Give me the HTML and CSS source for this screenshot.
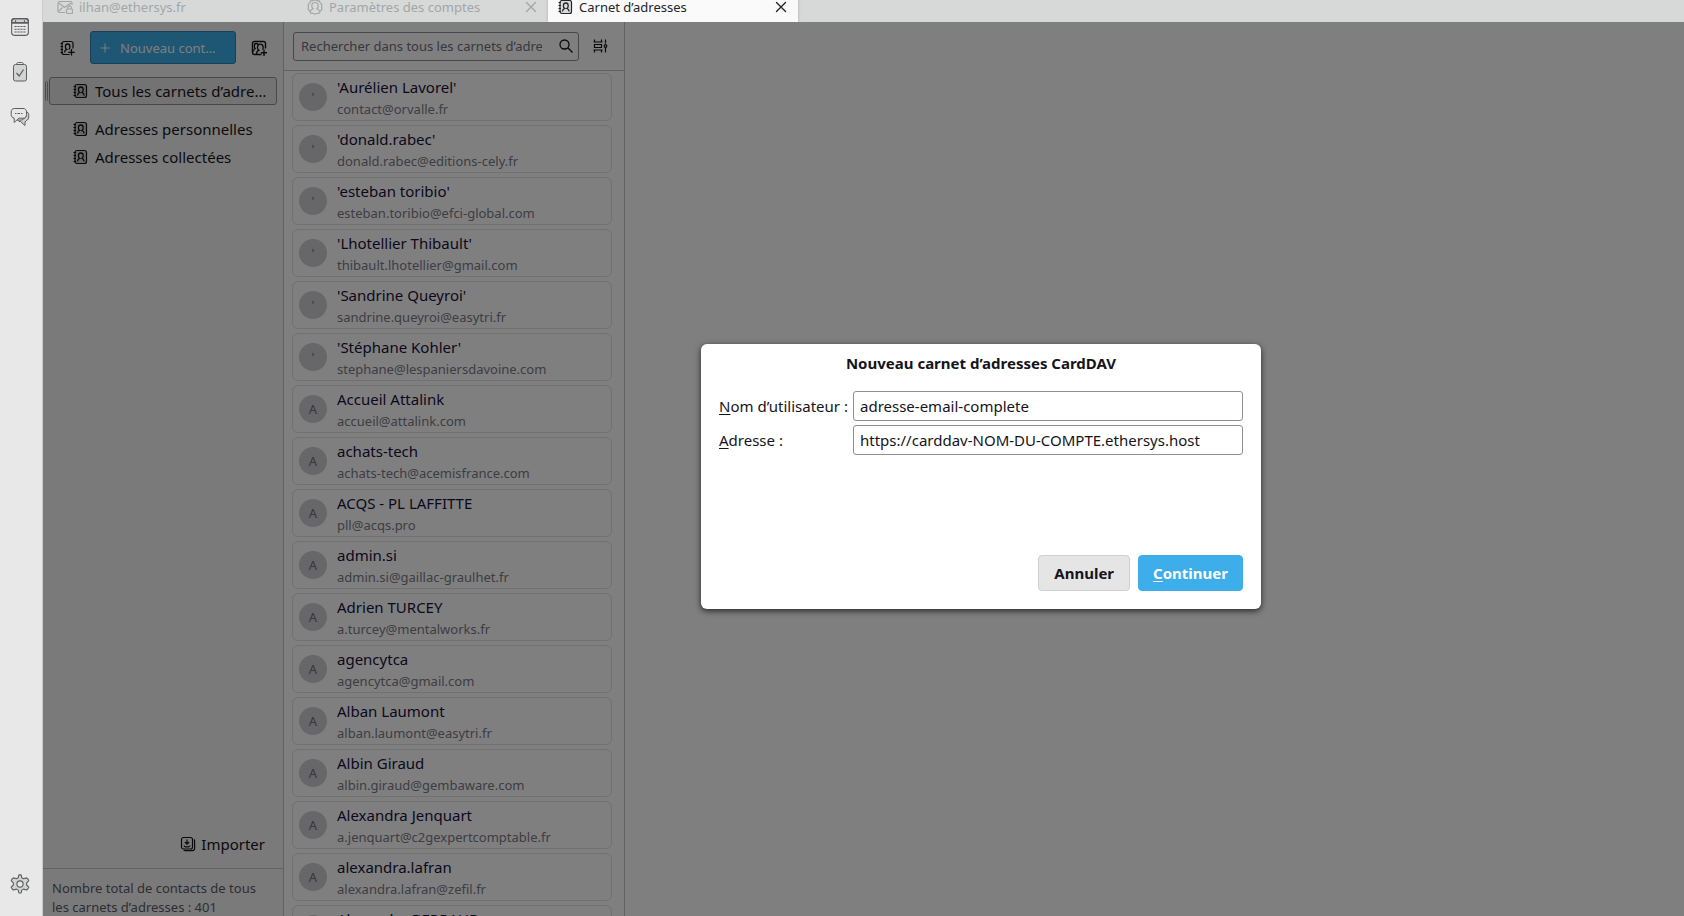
FILE: index.html
```html
<!DOCTYPE html>
<html lang="fr">
<head>
<meta charset="utf-8">
<title>Carnet d’adresses</title>
<link rel="stylesheet" href="styles.css">
</head>
<body>
<svg class="sprite" aria-hidden="true">
  <symbol id="i-book" viewBox="0 0 16 16">
    <rect x="3" y="1.500" width="11.500" height="13" rx="2" fill="currentColor" fill-opacity=".15" stroke="currentColor" stroke-width="1.200"/>
    <path d="M1.500 3.500h2.500M1.500 6.500h2.500M1.500 9.500h2.500M1.500 12.500h2.500" stroke="currentColor" stroke-width="1.200"/>
    <path d="M5.500 12.500c0-2 1-2.600 2.200-3C6.600 8.800 6.400 7.800 6.400 6.700 6.400 5 7.400 4 8.800 4s2.400 1 2.400 2.700c0 1.100-.2 2.100-1.300 2.800 1.200.4 2.200 1 2.200 3" fill="none" stroke="currentColor" stroke-width="1.300"/>
  </symbol>
  <symbol id="i-book-add" viewBox="0 0 16 16">
    <path d="M14 8.500V3.500a2 2 0 0 0-2-2H5a2 2 0 0 0-2 2v9a2 2 0 0 0 2 2h5.500" fill="none" stroke="currentColor" stroke-width="1.200"/>
    <path d="M1.500 3.500h2.500M1.500 6.500h2.500M1.500 9.500h2.500M1.500 12.500h2.500" stroke="currentColor" stroke-width="1.200"/>
    <path d="M5.500 12.500c0-2 1-2.600 2.200-3C6.600 8.800 6.400 7.800 6.400 6.700 6.400 5 7.300 4 8.600 4s2.300 1 2.300 2.700c0 1.100-.2 2.100-1.200 2.800M12.500 9v6.500M9.300 12.300h6.400" fill="none" stroke="currentColor" stroke-width="1.300"/>
  </symbol>
  <symbol id="i-list-add" viewBox="0 0 16 16">
    <path d="M14.500 8.500V3.500a2 2 0 0 0-2-2h-9a2 2 0 0 0-2 2v9a2 2 0 0 0 2 2H10.500" fill="none" stroke="currentColor" stroke-width="1.400"/>
    <path d="M5.500 14c0-2.300.8-3.200 2.300-3.700C6.800 9.600 6.500 8.500 6.500 7.500 6.500 5.500 7.600 4.200 9.400 4.200s2.800 1.300 2.800 3.300c0 .8-.2 1.500-.7 2.100M7 4.300C6.500 3.700 5.900 3.500 5.300 3.500c-1.300 0-2 1-2 2.500 0 1 .2 1.800.9 2.500C3.200 9 2.500 9.900 2.400 11.500" fill="none" stroke="currentColor" stroke-width="1.300"/>
    <path d="M13 9.500V16M9.800 12.700H16" stroke="currentColor" stroke-width="1.400"/>
  </symbol>
  <symbol id="i-close" viewBox="0 0 16 16"><path d="M3.500 3.500l9 9M12.500 3.500l-9 9" stroke="currentColor" stroke-width="1.400" stroke-linecap="round"/></symbol>
</svg>

<div class="app">
  <nav class="rail" aria-label="Espaces">
    <button class="rail-btn" aria-label="Agenda"><svg class="rail-icon" viewBox="0 0 18 18" fill="none" stroke="currentColor"><path d="M1.500 5V4a2.500 2.500 0 0 1 2.500-2.500h10A2.500 2.500 0 0 1 16.500 4v1z" fill="#cfcfcf"/><rect x="1.500" y="1.500" width="15" height="15" rx="2.500"/><path d="M1.500 5.500h15M5 3v2.500M13 3v2.500"/><path d="M4 8.500h10M4 11h10M4 13.500h10" stroke-dasharray="2 .67"/></svg></button>
    <button class="rail-btn" aria-label="Tâches"><svg class="rail-icon" viewBox="0 0 18 20" fill="none" stroke="currentColor"><rect x="2.500" y="2.500" width="13" height="16.500" rx="2" fill="#d2d3d3"/><path d="M5.500 2.500c0-1.200.8-2 2-2h3c1.200 0 2 .8 2 2z" fill="#e8e8e8"/><path d="M5.500 11l2.700 3L12.500 7.500" stroke-width="1.200"/></svg></button>
    <button class="rail-btn" aria-label="Discussion"><svg class="rail-icon" viewBox="0 0 20 20" fill="none" stroke="currentColor"><path d="M16 4.500c2 .6 2.800 2 2.800 4.500 0 2.500-.8 4-2.500 4.700L15 15v3.500L10.500 14.500H9l-1.500-1.500H12l4-3z" fill="#cfcfcf"/><path d="M4.500 1.500h8.500c2.300 0 3.500 1.300 3.500 3.500v2.500c0 2.500-1.200 3.700-3.500 3.700H8.800L4.200 15.500v-4.400C2.300 10.700 1.200 9.500 1.200 7.500V5c0-2.200 1.100-3.500 3.300-3.500z" fill="#e8e8e8"/><path d="M5 6.500h1.500M7.500 6.500h2.500M11 6.500h1.500"/></svg></button>
    <button class="rail-btn rail-last" aria-label="Paramètres"><svg class="rail-icon" viewBox="0 0 18 18" fill="none" stroke="currentColor" stroke-linejoin="round"><path d="M8 .8h2l.6 2.600 1.600.9 2.700-.8 1.100.9.900 1.500-1.900 2v2l1.900 2-.9 1.600-1.100.9-2.700-.8-1.600.9-.6 2.600H8l-.6-2.600-1.600-.9-2.700.8-1.100-.9-.9-1.600 1.900-2v-2l-1.900-2 .9-1.500 1.100-.9 2.700.8 1.600-.9z" fill="#d2d3d3"/><circle cx="9" cy="9" r="2.800" fill="#e8e8e8"/></svg></button>
  </nav>

  <div class="window">
    <div class="tabs" role="tablist">
      <div class="tab" role="tab"><svg class="icon" viewBox="0 0 16 16" fill="none" stroke="currentColor" stroke-width="1.200"><path d="M8 13.500H2.500a1.500 1.500 0 0 1-1.500-1.500V4a1.500 1.500 0 0 1 1.500-1.500h11A1.500 1.500 0 0 1 15 4v2M2 4l5.500 4.500L14 4M2 12l3.500-3.500"/><rect x="9.500" y="10" width="6" height="4.500" rx="1"/><path d="M10.800 10V8.500a1.700 1.700 0 0 1 3.400 0V10"/></svg><span class="tab-label">ilhan@ethersys.fr</span></div>
      <div class="tab" role="tab"><svg class="icon" viewBox="0 0 16 16" fill="none" stroke="currentColor" stroke-width="1.200"><path d="M8 .8l2 .9 2.300.1.900 2.100 1.600 1.500-.2 2.600.2 2.600-1.600 1.500-.9 2.100-2.300.1-2 .9-2-.9-2.300-.1-.9-2.100-1.600-1.500.2-2.600-.2-2.600 1.600-1.500.9-2.100L6 1.700z"/><path d="M3.500 12.500c0-1.800 1-2.300 2.500-2.800C5 8.900 4.800 8 4.800 6.800 4.800 4.700 6 3.500 8 3.500s3.200 1.200 3.200 3.300c0 1.200-.2 2.100-1.200 2.900 1.500.5 2.500 1 2.500 2.800"/></svg><span class="tab-label">Paramètres des comptes</span><button class="tab-close" aria-label="Fermer"><svg class="icon"><use href="#i-close"/></svg></button></div>
      <div class="tab tab-active" role="tab" aria-selected="true"><svg class="icon"><use href="#i-book"/></svg><span class="tab-label">Carnet d’adresses</span><button class="tab-close" aria-label="Fermer"><svg class="icon"><use href="#i-close"/></svg></button></div>
    </div>

    <div class="content">
      <aside class="sidebar">
        <div class="toolbar">
          <button class="icon-btn" aria-label="Nouveau carnet"><svg class="icon"><use href="#i-book-add"/></svg></button>
          <button class="new-contact"><svg class="plus" viewBox="0 0 10 10"><path d="M5 .5v9M.5 5h9" stroke="currentColor"/></svg><span class="ellipsis">Nouveau contact</span></button>
          <button class="icon-btn" aria-label="Nouvelle liste"><svg class="icon"><use href="#i-list-add"/></svg></button>
        </div>
        <div class="books">
          <div class="book-current"><span class="grip"></span><button class="book book-selected"><svg class="icon"><use href="#i-book"/></svg><span class="ellipsis">Tous les carnets d’adresses</span></button></div>
          <button class="book"><svg class="icon"><use href="#i-book"/></svg><span class="ellipsis">Adresses personnelles</span></button>
          <button class="book"><svg class="icon"><use href="#i-book"/></svg><span class="ellipsis">Adresses collectées</span></button>
        </div>
        <button class="import"><svg class="icon" viewBox="0 0 16 16" fill="none" stroke="currentColor" stroke-width="1.200"><rect x="1.500" y="1.500" width="11" height="11.500" rx="2"/><path d="M14 3.500c.5.500.6 1 .6 1.500v7.500a2.200 2.200 0 0 1-2.200 2.200H5.500c-.8 0-1.400-.2-1.800-.7M7 3.500v4.500M4.800 6L7 8.200 9.200 6M4 9.500c.2 1 .7 1.300 1.500 1.300h3c.8 0 1.300-.3 1.500-1.300"/></svg>Importer</button>
        <p class="count">Nombre total de contacts de tous les carnets d’adresses : 401</p>
      </aside>

      <section class="list-pane">
        <div class="list-head">
          <label class="search"><input class="search-input" type="text" aria-label="Rechercher" placeholder="Rechercher dans tous les carnets d’adresses"><svg class="icon" viewBox="0 0 16 16" fill="none" stroke="currentColor" stroke-width="1.300"><circle cx="6.500" cy="6.500" r="4.500"/><path d="M9.800 9.800l4.700 4.700"/></svg></label>
          <button class="icon-btn" aria-label="Affichage"><svg class="icon" viewBox="0 0 16 16" fill="none" stroke="currentColor" stroke-width="1.200"><path d="M2.500 1.500V4h7V1.500M2.500 6.500h7v3h-7zM2.500 14.500V12h7v2.500M1.500 4h9M1.500 12h9M13.500 1.500v4M13.500 9v5.500"/><circle cx="13.500" cy="8" r="1.300"/></svg></button>
        </div>
        <ul class="cards">
          <li class="card"><span class="avatar">'</span><div class="who"><div class="name">'Aurélien Lavorel'</div><div class="mail">contact@orvalle.fr</div></div></li>
          <li class="card"><span class="avatar">'</span><div class="who"><div class="name">'donald.rabec'</div><div class="mail">donald.rabec@editions-cely.fr</div></div></li>
          <li class="card"><span class="avatar">'</span><div class="who"><div class="name">'esteban toribio'</div><div class="mail">esteban.toribio@efci-global.com</div></div></li>
          <li class="card"><span class="avatar">'</span><div class="who"><div class="name">'Lhotellier Thibault'</div><div class="mail">thibault.lhotellier@gmail.com</div></div></li>
          <li class="card"><span class="avatar">'</span><div class="who"><div class="name">'Sandrine Queyroi'</div><div class="mail">sandrine.queyroi@easytri.fr</div></div></li>
          <li class="card"><span class="avatar">'</span><div class="who"><div class="name">'Stéphane Kohler'</div><div class="mail">stephane@lespaniersdavoine.com</div></div></li>
          <li class="card"><span class="avatar">A</span><div class="who"><div class="name">Accueil Attalink</div><div class="mail">accueil@attalink.com</div></div></li>
          <li class="card"><span class="avatar">A</span><div class="who"><div class="name">achats-tech</div><div class="mail">achats-tech@acemisfrance.com</div></div></li>
          <li class="card"><span class="avatar">A</span><div class="who"><div class="name">ACQS - PL LAFFITTE</div><div class="mail">pll@acqs.pro</div></div></li>
          <li class="card"><span class="avatar">A</span><div class="who"><div class="name">admin.si</div><div class="mail">admin.si@gaillac-graulhet.fr</div></div></li>
          <li class="card"><span class="avatar">A</span><div class="who"><div class="name">Adrien TURCEY</div><div class="mail">a.turcey@mentalworks.fr</div></div></li>
          <li class="card"><span class="avatar">A</span><div class="who"><div class="name">agencytca</div><div class="mail">agencytca@gmail.com</div></div></li>
          <li class="card"><span class="avatar">A</span><div class="who"><div class="name">Alban Laumont</div><div class="mail">alban.laumont@easytri.fr</div></div></li>
          <li class="card"><span class="avatar">A</span><div class="who"><div class="name">Albin Giraud</div><div class="mail">albin.giraud@gembaware.com</div></div></li>
          <li class="card"><span class="avatar">A</span><div class="who"><div class="name">Alexandra Jenquart</div><div class="mail">a.jenquart@c2gexpertcomptable.fr</div></div></li>
          <li class="card"><span class="avatar">A</span><div class="who"><div class="name">alexandra.lafran</div><div class="mail">alexandra.lafran@zefil.fr</div></div></li>
          <li class="card"><span class="avatar">A</span><div class="who"><div class="name">Alexandre BERRAUD</div></div></li>
        </ul>
      </section>
      <main class="detail"></main>
      <div class="backdrop"></div>
    </div>
  </div>

  <form class="dialog" role="dialog" aria-labelledby="dlg-title">
    <h1 class="dialog-title" id="dlg-title">Nouveau carnet d’adresses CardDAV</h1>
    <div class="fields">
      <label for="user"><u>N</u>om d’utilisateur :</label>
      <input class="field" id="user" type="text" value="adresse-email-complete">
      <label for="url"><u>A</u>dresse :</label>
      <input class="field" id="url" type="text" value="https://carddav-NOM-DU-COMPTE.ethersys.host">
    </div>
    <div class="actions">
      <button class="btn" type="button">Annuler</button>
      <button class="btn btn-primary" type="button"><span><u>C</u>ontinuer</span></button>
    </div>
  </form>
</div>
</body>
</html>
```
FILE: styles.css
```css
* { box-sizing: border-box; }
body {
  margin: 0;
  font: 15px/20px "Noto Sans", sans-serif;
  color: #15141a;
}
button, input { font: inherit; color: inherit; margin: 0; }
button { border: 0; background: none; padding: 0; }
.sprite { display: none; }
.icon { width: 16px; height: 16px; flex: none; display: block; }
.ellipsis { overflow: hidden; text-overflow: ellipsis; white-space: nowrap; min-width: 0; }

.app { display: flex; height: 100vh; overflow: hidden; position: relative; }

.rail {
  width: 43px;
  flex: none;
  display: flex;
  flex-direction: column;
  align-items: center;
  padding: 4px 3px 10px 0;
  background: #e8e8e8;
  border-right: 1px solid #cbcccc;
  color: #5c5d5f;
}
.rail-btn { width: 32px; height: 45px; display: grid; place-items: center; }
.rail-last { margin-top: auto; }
.rail-icon { width: 20px; height: 20px; }

.window { flex: 1; min-width: 0; display: flex; flex-direction: column; }
.tabs { height: 22px; flex: none; display: flex; align-items: flex-end; background: #d7d9d8; padding-left: 5px; color: #a3a6a7; font-size: 13px; line-height: 14px; }
.tab { width: 250px; height: 31px; flex: none; display: flex; align-items: center; gap: 6px; padding: 0 9px; }
.tab-label { flex: 1; }
.tab-active { background: #fafafa; color: #232629; box-shadow: 0 0 3px rgba(0, 0, 0, .2); }

.content { flex: 1; min-height: 0; display: flex; position: relative; background: #fff; }
.backdrop { position: absolute; inset: 0; background: rgba(0, 0, 0, .5); }

.sidebar { width: 241px; flex: none; display: flex; flex-direction: column; background: #f5f5f5; border-right: 1px solid #c4c4c6; }
.toolbar { display: flex; align-items: center; gap: 15px; padding: 9px 16px; }
.new-contact {
  flex: 1;
  min-width: 0;
  height: 33px;
  display: flex;
  align-items: center;
  gap: 10px;
  padding: 0 15px 0 9px;
  border: 1px solid #2a82b2;
  border-radius: 3px;
  background: #3daee9;
  color: #fcfcfc;
  font-size: 13px;
}
.plus { width: 10px; height: 10px; flex: none; }
.books { flex: 1; padding-top: 4px; }
.book-current { display: flex; align-items: center; padding: 0 6px 10px 2px; gap: 1px; }
.grip { width: 3px; height: 20px; flex: none; border: 1px solid #9a9aa0; border-radius: 2px; }
.book { width: 100%; height: 28px; display: flex; align-items: center; gap: 7px; padding: 0 10px 0 29px; text-align: left; }
.book-selected { flex: 1; min-width: 0; border: 1px solid #8f8f9d; border-radius: 3px; padding: 0 8px 0 22px; background: #e7e7e7; }
.import { display: flex; align-items: center; gap: 5px; align-self: flex-end; margin: 0 18px 14px 0; }
.count { margin: 0; border-top: 1px solid #c4c4c6; padding: 10px 9px 0; height: 48px; font-size: 13px; line-height: 19px; color: #5b5b66; }

.list-pane { width: 341px; flex: none; display: flex; flex-direction: column; border-right: 1px solid #c4c4c6; }
.list-head { height: 49px; flex: none; display: flex; align-items: center; gap: 13px; padding: 0 16px 0 9px; border-bottom: 1px solid #c4c4c6; }
.search { flex: 1; min-width: 0; height: 29px; display: flex; align-items: center; border: 1px solid #8f8f9d; border-radius: 3px; padding: 0 4px 0 7px; gap: 16px; }
.search-input { flex: 1; min-width: 0; border: 0; padding: 0; background: none; outline: 0; font-size: 13px; }
.search-input::placeholder { color: #6f6f78; opacity: 1; }

.cards { list-style: none; margin: 0; padding: 2px 12px 0 8px; display: flex; flex-direction: column; gap: 4px; overflow: hidden; min-height: 0; }
.card { height: 48px; flex: none; display: flex; align-items: center; gap: 10px; padding: 0 6px; border: 1px solid #e2e2e4; border-radius: 6px; }
.avatar { width: 28px; height: 28px; flex: none; border-radius: 50%; display: grid; place-items: center; background: #cfcfd2; color: #6c6c76; font-size: 13px; line-height: 24px; }
.who { height: 43px; }
.name { line-height: 22px; color: #18103c; }
.mail { font-size: 13px; line-height: 23px; color: #7b7a87; }
.detail { flex: 1; }

.dialog {
  position: absolute;
  left: 701px;
  top: 344px;
  width: 560px;
  display: flex;
  flex-direction: column;
  padding: 9px 18px 18px;
  background: #fff;
  border-radius: 6px;
  box-shadow: 0 2px 6px rgba(0, 0, 0, .7);
}
.dialog-title { margin: 0 0 17px; font-size: 15px; line-height: 21px; font-weight: 700; text-align: center; }
.fields { display: grid; grid-template-columns: auto 390px; justify-content: space-between; align-items: center; row-gap: 4px; }
.field { width: 100%; height: 30px; border: 1px solid #8f8f9d; border-radius: 3px; padding: 0 6px; background: #fff; outline: 0; }
.actions { display: flex; justify-content: flex-end; gap: 8px; margin-top: 100px; }
.btn { height: 36px; padding: 0 15px; border: 1px solid #cfcfd0; border-radius: 4px; background: #e5e5e5; font-weight: 700; }
.btn-primary { padding: 0 14px; border-color: #3daee9; background: #3daee9; color: #fcfcfc; }
u { text-underline-offset: 2px; }
```
